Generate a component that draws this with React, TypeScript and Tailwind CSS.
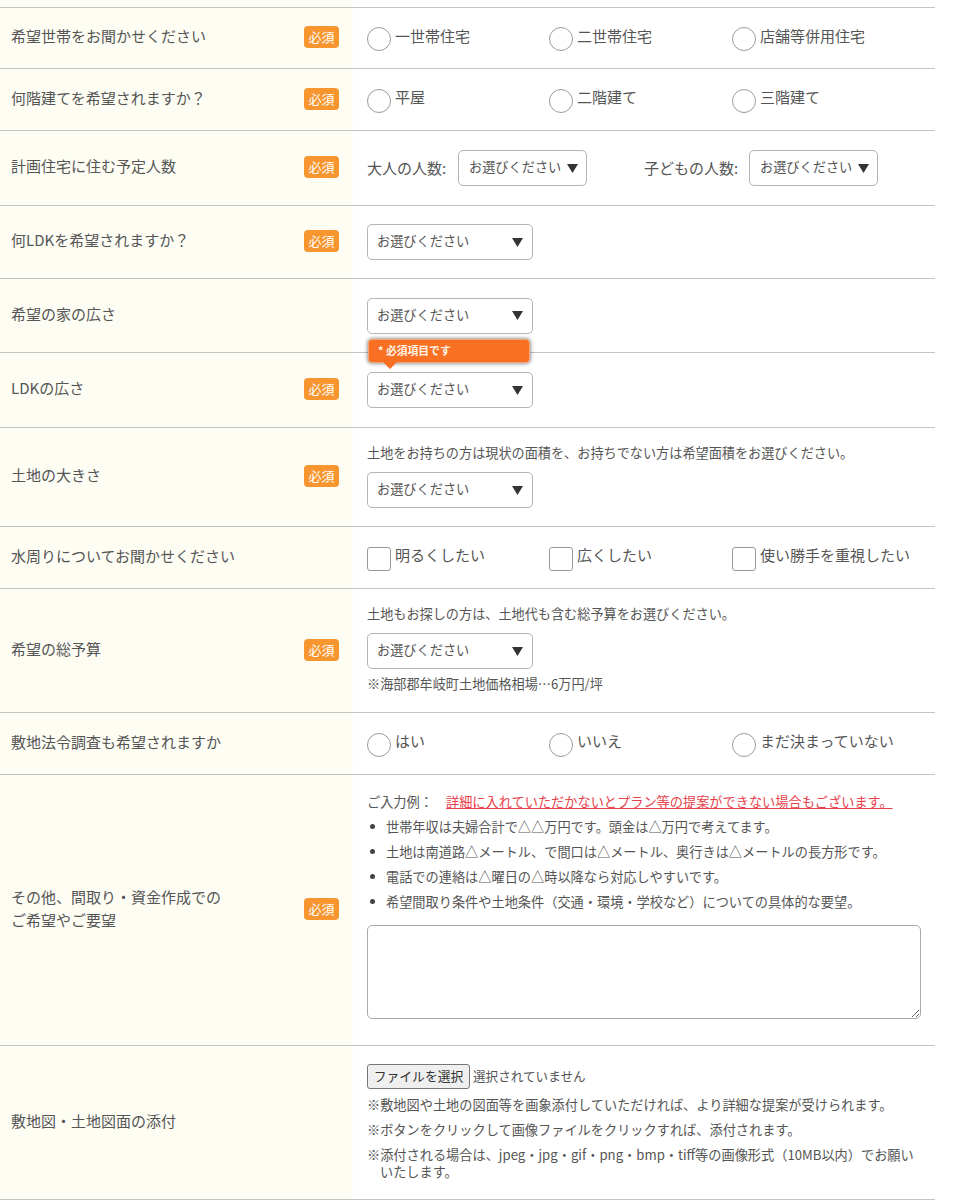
import type { ReactNode } from "react";

const font = "font-['Noto_Sans_CJK_JP','Noto_Sans',sans-serif]";

function Badge() {
  return (
    <span className="mb-[2px] flex h-[22px] w-[35px] shrink-0 items-center justify-center rounded-[4px] bg-[#f7962f] pb-[1px] text-[13px] leading-none text-white">
      必須
    </span>
  );
}

function Row({
  label,
  required,
  height,
  children,
}: {
  label: ReactNode;
  required?: boolean;
  height: string;
  children: ReactNode;
}) {
  return (
    <div className={`flex border-b border-[#c4c4c4] ${height}`}>
      <div className="flex w-[353px] shrink-0 items-center justify-between bg-[#fdfdf4] pl-[11px] pr-[14px] text-[15px] leading-[23px]">
        <div className="mb-[5px]">{label}</div>
        {required && <Badge />}
      </div>
      <div className="relative flex min-w-0 flex-1 flex-col justify-center pl-[14px] pr-[14px]">{children}</div>
    </div>
  );
}

function Triangle({ className }: { className?: string }) {
  return (
    <svg width="11" height="9" viewBox="0 0 11 9" className={className}>
      <path d="M0 0h11L5.5 9z" fill="#333" />
    </svg>
  );
}

function Select({ small }: { small?: boolean }) {
  return (
    <div
      className={`flex h-[36px] shrink-0 items-center justify-between rounded-[5px] border border-[#b5b5b5] bg-white text-[13.2px] ${
        small ? "w-[129px] pl-[10px] pr-[4px]" : "w-[166px] pl-[9px] pr-[9px]"
      }`}
    >
      <span className="pb-[2px]">お選びください</span>
      <Triangle className={small ? "mr-[4px]" : ""} />
    </div>
  );
}

function Choices({ items, type }: { items: string[]; type: "radio" | "checkbox" }) {
  return (
    <div className="mt-[2px] grid grid-cols-[182px_183px_1fr] text-[15px]">
      {items.map((item) => (
        <label key={item} className="flex items-center gap-[4px]">
          <span
            className={`h-[24px] w-[24px] shrink-0 border border-[#9a9a9a] bg-white ${
              type === "radio" ? "rounded-full" : "rounded-[3px]"
            }`}
          />
          <span className="-mt-[6px] whitespace-nowrap">{item}</span>
        </label>
      ))}
    </div>
  );
}

const examples = [
  "世帯年収は夫婦合計で△△万円です。頭金は△万円で考えてます。",
  "土地は南道路△メートル、で間口は△メートル、奥行きは△メートルの長方形です。",
  "電話での連絡は△曜日の△時以降なら対応しやすいです。",
  "希望間取り条件や土地条件（交通・環境・学校など）についての具体的な要望。",
];

export default function App() {
  return (
    <div className={`w-[935px] bg-white text-[#555] ${font}`}>
      <div className="flex h-[8px] border-b border-[#c4c4c4]">
        <div className="w-[353px] bg-[#fdfdf4]" />
      </div>

      <Row label="希望世帯をお聞かせください" required height="h-[61px]">
        <Choices type="radio" items={["一世帯住宅", "二世帯住宅", "店舗等併用住宅"]} />
      </Row>
      <Row label="何階建てを希望されますか？" required height="h-[62px]">
        <Choices type="radio" items={["平屋", "二階建て", "三階建て"]} />
      </Row>
      <Row label="計画住宅に住む予定人数" required height="h-[75px]">
        <div className="flex items-center text-[15px]">
          <span className="w-[91px]">大人の人数:</span>
          <Select small />
          <span className="ml-[57px] w-[105px]">子どもの人数:</span>
          <Select small />
        </div>
      </Row>
      <Row label="何LDKを希望されますか？" required height="h-[73px]">
        <Select />
      </Row>
      <Row label="希望の家の広さ" height="h-[74px]">
        <Select />
      </Row>
      <Row label="LDKの広さ" required height="h-[75px]">
        <Select />
        {/* validation balloon sits over the row border */}
        <div className="absolute left-[15px] top-[-14px] flex h-[24px] w-[162px] items-center rounded-[4px] border border-[#f3a778] bg-[#f97022] pb-[2px] pl-[9px] text-[10.8px] font-bold text-[#fff3e8] shadow-[0_0_4px_rgba(0,0,0,0.6)]">
          * 必須項目です
          <span className="absolute left-[14px] top-[22px] h-0 w-0 border-x-[7px] border-t-[7px] border-x-transparent border-t-[#f97022]" />
        </div>
      </Row>
      <Row label="土地の大きさ" required height="h-[99px]">
        <p className="-mt-[3px] mb-[10px] text-[13.15px] leading-[19px]">土地をお持ちの方は現状の面積を、お持ちでない方は希望面積をお選びください。</p>
        <Select />
      </Row>
      <Row label="水周りについてお聞かせください" height="h-[62px]">
        <Choices type="checkbox" items={["明るくしたい", "広くしたい", "使い勝手を重視したい"]} />
      </Row>
      <Row label="希望の総予算" required height="h-[124px]">
        <p className="-mt-[4px] mb-[10px] text-[13.15px] leading-[19px]">土地もお探しの方は、土地代も含む総予算をお選びください。</p>
        <Select />
        <p className="mt-[5px] text-[13.15px] leading-[19px]">※海部郡牟岐町土地価格相場…6万円/坪</p>
      </Row>
      <Row label="敷地法令調査も希望されますか" height="h-[62px]">
        <Choices type="radio" items={["はい", "いいえ", "まだ決まっていない"]} />
      </Row>
      <Row
        label={
          <>
            その他、間取り・資金作成での
            <br />
            ご希望やご要望
          </>
        }
        required
        height="h-[271px]"
      >
        <div className="flex text-[13.2px] leading-[25px]">
          <span className="w-[79px]">ご入力例：</span>
          <span className="text-[#e8424c] underline">詳細に入れていただかないとプラン等の提案ができない場合もございます。</span>
        </div>
        <ul className="text-[13.2px] leading-[25px]">
          {examples.map((text) => (
            <li key={text} className="flex items-center">
              <span className="ml-[3px] mr-[11px] h-[5px] w-[5px] shrink-0 rounded-full bg-[#444]" />
              {text}
            </li>
          ))}
        </ul>
        <textarea className="mb-[12px] mt-[11px] h-[94px] w-full rounded-[5px] border border-[#aaa] bg-white" />
      </Row>
      <Row label="敷地図・土地図面の添付" height="h-[154px]">
        <div className="flex items-center">
          <button className="h-[25px] w-[103px] rounded-[3px] border border-[#767676] bg-[#efefef] text-[12.8px] text-[#333]">
            ファイルを選択
          </button>
          <span className="ml-[3px] text-[12.6px]">選択されていません</span>
        </div>
        <div className="mb-[2px] mt-[7px] text-[13.2px] leading-[17px]">
          <p className="pl-[13px] -indent-[13px]">※敷地図や土地の図面等を画象添付していただければ、より詳細な提案が受けられます。</p>
          <p className="mt-[8px] pl-[13px] -indent-[13px]">※ボタンをクリックして画像ファイルをクリックすれば、添付されます。</p>
          <p className="mt-[8px] pl-[13px] -indent-[13px]">
            ※添付される場合は、jpeg・jpg・gif・png・bmp・tiff等の画像形式（10MB以内）でお願いいたします。
          </p>
        </div>
      </Row>
    </div>
  );
}
